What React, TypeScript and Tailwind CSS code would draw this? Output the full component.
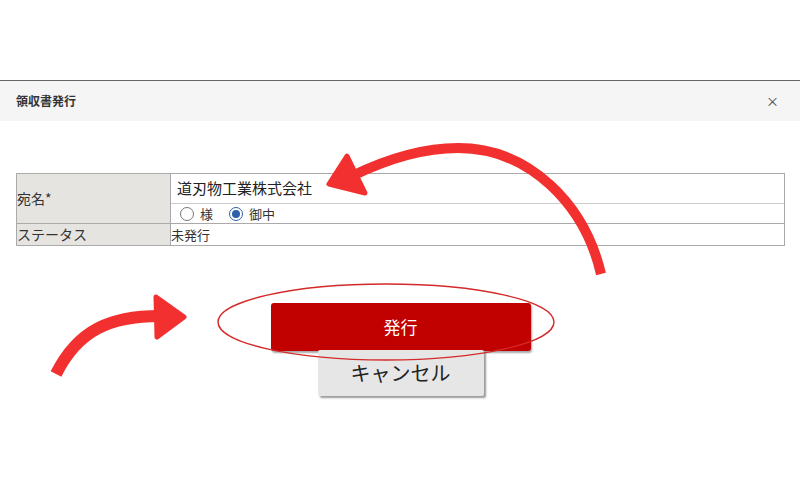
import React from 'react';

const FONT = '"Noto Sans CJK JP", "Noto Sans", "Liberation Sans", sans-serif';

function Radio({ checked, label }: { checked?: boolean; label: string }) {
  return (
    <label className="flex items-center gap-[6px]">
      <span
        className={
          'w-[14px] h-[14px] rounded-full border flex items-center justify-center bg-white ' +
          (checked ? 'border-[#2f5fa8] border-[1.5px]' : 'border-[#777]')
        }
      >
        {checked && <span className="w-[8px] h-[8px] rounded-full bg-[#2f5fa8]" />}
      </span>
      <span className="text-[13px] leading-none text-[#333]">{label}</span>
    </label>
  );
}

function Arrows() {
  return (
    <svg className="absolute inset-0 pointer-events-none" width={800} height={504} viewBox="0 0 800 504">
      {/* ellipse round the issue button */}
      <ellipse cx={386} cy={322} rx={168} ry={38} fill="none" stroke="#d42a2a" strokeWidth={1.4} />
      {/* top arrow */}
      <path d="M601 274 C 585 205, 530 148, 458 148 C 420 148, 385 160, 352 176" fill="none" stroke="#f2302f" strokeWidth={10} />
      <path d="M347 156 L329 184 L365 193 Z" fill="#f2302f" stroke="#f2302f" strokeWidth={5} strokeLinejoin="round" />
      {/* left arrow */}
      <path d="M56 374 C 78 330, 110 316, 160 316" fill="none" stroke="#f2302f" strokeWidth={12} />
      <path d="M156 297 L184 317 L157 337 Z" fill="#f2302f" stroke="#f2302f" strokeWidth={5} strokeLinejoin="round" />
    </svg>
  );
}

export default function App() {
  return (
    <div className="relative w-[800px] h-[504px] bg-white overflow-hidden" style={{ fontFamily: FONT }}>
      <div className="h-[80px]" />

      {/* Dialog */}
      <div className="border-t border-[#666]">
        {/* Header */}
        <div className="h-[40px] bg-[#f5f5f5] flex items-center justify-between px-4">
          <span className="text-[12px] font-bold text-[#333]">領収書発行</span>
          <span className="text-[13px] text-[#444] mr-[5px]">×</span>
        </div>

        {/* Body */}
        <div className="pt-[52px] pl-4 pr-[15px]">
          <div className="border border-[#aaa] text-[#333]">
            <div className="flex h-[50px] border-b border-[#aaa]">
              <div className="w-[154px] shrink-0 bg-[#e6e4e1] border-r border-[#aaa] flex items-center text-[14px]">
                宛名*
              </div>
              <div className="flex-1 flex flex-col">
                <div className="h-[30px] border-b border-[#ccc] flex items-center pl-[6px] text-[15px] text-[#222]">
                  道刃物工業株式会社
                </div>
                <div className="flex-1 flex items-center gap-[16px] pl-[9px]">
                  <Radio label="様" />
                  <Radio checked label="御中" />
                </div>
              </div>
            </div>
            <div className="flex h-[21px]">
              <div className="w-[154px] shrink-0 bg-[#e6e4e1] border-r border-[#aaa] flex items-center text-[14px]">
                ステータス
              </div>
              <div className="flex-1 flex items-center text-[13px]">未発行</div>
            </div>
          </div>

          {/* Buttons */}
          <div className="flex flex-col items-center mt-[57px]">
            <button className="w-[260px] h-[48px] bg-[#c10000] rounded-[3px] text-white text-[17px] shadow-[1px_2px_2px_rgba(0,0,0,0.35)]">
              発行
            </button>
            <button className="w-[166px] h-[46px] bg-[#e6e6e6] rounded-[2px] text-[#222] text-[20px] shadow-[2px_2px_2px_rgba(0,0,0,0.4)] -mt-[1px]">
              キャンセル
            </button>
          </div>
        </div>
      </div>

      <Arrows />
    </div>
  );
}
